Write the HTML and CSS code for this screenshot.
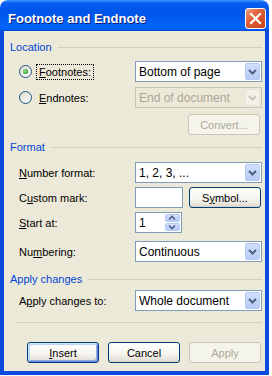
FILE: index.html
```html
<!DOCTYPE html>
<html lang="en">
<head>
<meta charset="UTF-8" />
<title>Footnote and Endnote</title>
<link rel="stylesheet" href="styles.css">
</head>
<body>

<div class="window">
  <div class="titlebar">
    <span class="title">Footnote and Endnote</span>
    <span class="close">
      <svg width="19" height="19" viewBox="0 0 19 19"><path d="M5 5 L14 14 M14 5 L5 14" stroke="#fff" stroke-width="2.2" stroke-linecap="square" fill="none"/></svg>
    </span>
  </div>

  <div class="frame">
    <div class="group-title">Location</div>
    <div class="row first">
      <div class="label-cell">
        <span class="radio checked"></span>
        <span class="radio-label focus"><u>F</u>ootnotes:</span>
      </div>
      <div class="combo">Bottom of page<span class="arrow"><svg width="15" height="17"><path d="M4 7 L7.5 10.5 L11 7" stroke="#4D6185" stroke-width="2" fill="none"/></svg></span></div>
    </div>
    <div class="row">
      <div class="label-cell">
        <span class="radio"></span>
        <span class="radio-label"><u>E</u>ndnotes:</span>
      </div>
      <div class="combo disabled">End of document<span class="arrow"><svg width="15" height="17"><path d="M4 7 L7.5 10.5 L11 7" stroke="#C9C7BA" stroke-width="2" fill="none"/></svg></span></div>
    </div>
    <div class="row right gap6">
      <button class="btn disabled">Convert...</button>
    </div>

    <div class="group-title gap5">Format</div>
    <div class="row gap8">
      <label><u>N</u>umber format:</label>
      <div class="combo">1, 2, 3, ...<span class="arrow"><svg width="15" height="17"><path d="M4 7 L7.5 10.5 L11 7" stroke="#4D6185" stroke-width="2" fill="none"/></svg></span></div>
    </div>
    <div class="row gap4">
      <label>C<u>u</u>stom mark:</label>
      <div class="textbox mark"></div>
      <button class="btn symbol">S<u>y</u>mbol...</button>
    </div>
    <div class="row gap4">
      <label><u>S</u>tart at:</label>
      <div class="textbox spin">1
        <span class="spin-btns">
          <span class="spin-btn"><svg width="14" height="8"><path d="M4 5.5 L7 2.5 L10 5.5" stroke="#4D6185" stroke-width="1.6" fill="none"/></svg></span>
          <span class="spin-btn"><svg width="14" height="8"><path d="M4 2.5 L7 5.5 L10 2.5" stroke="#4D6185" stroke-width="1.6" fill="none"/></svg></span>
        </span>
      </div>
    </div>
    <div class="row gap8">
      <label>Nu<u>m</u>bering:</label>
      <div class="combo">Continuous<span class="arrow"><svg width="15" height="17"><path d="M4 7 L7.5 10.5 L11 7" stroke="#4D6185" stroke-width="2" fill="none"/></svg></span></div>
    </div>

    <div class="group-title gap10">Apply changes</div>
    <div class="row gap4">
      <label>A<u>p</u>ply changes to:</label>
      <div class="combo">Whole document<span class="arrow"><svg width="15" height="17"><path d="M4 7 L7.5 10.5 L11 7" stroke="#4D6185" stroke-width="2" fill="none"/></svg></span></div>
    </div>

    <div class="separator"></div>

    <div class="buttons">
      <button class="btn default"><u>I</u>nsert</button>
      <button class="btn">Cancel</button>
      <button class="btn disabled">Apply</button>
    </div>
  </div>
</div>

</body>
</html>
```

FILE: styles.css
```css
body { margin: 0; background: #fff; font: 11px "Liberation Sans", Arial, sans-serif; color: #000; }
u { text-decoration: underline; text-underline-offset: 1px; }

.window { width: 269px; }

.titlebar {
  height: 31px;
  box-sizing: border-box;
  padding: 6px 3px 0 8px;
  display: flex;
  align-items: center;
  justify-content: space-between;
  border-radius: 8px 8px 0 0;
  background: linear-gradient(#3d95ff 0, #0a5fef 3px, #0058ee 8px, #0055e9 40%, #0063fb 85%, #0062f7 92%, #0049d9 100%);
}
.title {
  font: bold 13px "Liberation Sans", Arial, sans-serif;
  color: #fff;
  letter-spacing: 0;
  text-shadow: 1px 1px #0a1a7a;
}
.close {
  width: 19px;
  height: 19px;
  display: flex;
  border: 1px solid #fff;
  border-radius: 3px;
  background: linear-gradient(135deg, #f0a07e 0, #e06038 40%, #c8401a 100%);
}

.frame {
  height: 344px;
  box-sizing: border-box;
  background: #ece9d8;
  border: 4px solid #0a4ade;
  border-top: 0;
  padding: 9px 3px 0 0;
}

.group-title {
  display: flex;
  align-items: center;
  height: 14px;
  padding-left: 6px;
  color: #0046d5;
}
.group-title::after {
  content: "";
  flex: 1;
  height: 1px;
  margin-left: 6px;
  background: #d0d0bf;
}

.row {
  display: flex;
  align-items: center;
  height: 21px;
  padding-left: 15px;
  margin-top: 5px;
}
.row.first { margin-top: 7px; }
.row.right { justify-content: flex-end; padding-right: 2px; }
.gap4 { margin-top: 4px; }
.gap5 { margin-top: 5px; }
.gap6 { margin-top: 6px; }
.gap8 { margin-top: 8px; }
.gap10 { margin-top: 10px; }

.row label { width: 116px; }
.label-cell { width: 116px; display: flex; align-items: center; }

.radio {
  width: 11px;
  height: 11px;
  border: 1px solid #1c5180;
  border-radius: 50%;
  background: linear-gradient(135deg, #dcdad0, #fff);
  margin-right: 4px;
  position: relative;
}
.radio.checked::after {
  content: "";
  position: absolute;
  left: 3px;
  top: 3px;
  width: 5px;
  height: 5px;
  border-radius: 50%;
  background: radial-gradient(circle at 40% 40%, #a6e8a6, #21a121 70%);
}
.radio-label { padding: 1px 2px; border: 1px dotted transparent; }
.radio-label.focus { border-color: #000; }

.combo {
  flex: 1;
  height: 21px;
  box-sizing: border-box;
  border: 1px solid #7f9db9;
  background: #fff;
  display: flex;
  align-items: center;
  justify-content: space-between;
  padding-left: 3px;
  font-size: 12px;
}
.combo.disabled { border-color: #c9c7ba; background: #ece9d8; color: #aca899; }
.arrow {
  width: 15px;
  height: 17px;
  margin: 1px;
  box-sizing: border-box;
  border: 1px solid #b5c9f5;
  border-radius: 2px;
  background: linear-gradient(#d2defb, #b7cbf6);
  display: flex;
}
.arrow svg { margin: -1px; }
.combo.disabled .arrow { border-color: #e8e6da; background: #f4f2e8; }

.textbox {
  height: 21px;
  box-sizing: border-box;
  border: 1px solid #7f9db9;
  background: #fff;
  padding-left: 3px;
  display: flex;
  align-items: center;
  font-size: 12px;
}
.textbox.mark { width: 48px; margin-right: 6px; }
.textbox.spin { width: 47px; justify-content: space-between; }
.spin-btns { display: flex; flex-direction: column; gap: 1px; margin: 1px; }
.spin-btn {
  width: 15px;
  height: 8px;
  box-sizing: border-box;
  border: 1px solid #b5c9f5;
  border-radius: 2px;
  background: linear-gradient(#d2defb, #b7cbf6);
  display: flex;
}
.spin-btn svg { margin: -1px 0 0 -1px; }

.btn {
  width: 72px;
  height: 21px;
  padding: 0;
  border: 1px solid #003c74;
  border-radius: 3px;
  background: linear-gradient(#ffffff, #f5f4ef 60%, #e3e0d6 90%, #d6d0c5);
  font: 11px "Liberation Sans", Arial, sans-serif;
  color: #000;
}
.btn.default {
  box-shadow: inset 1px 1px #cee7ff, inset -1px -1px #6982ee, inset 2px 2px #bcd4f6, inset -2px -2px #89ade4;
}
.btn.disabled { border-color: #c9c7ba; background: #f5f4ea; color: #aca899; }
.btn.symbol { margin-left: 0; }

.separator { height: 1px; background: #d0d0bf; margin: 11px 0 0 13px; }

.buttons { display: flex; gap: 9px; padding-left: 23px; margin-top: 19px; }
```
